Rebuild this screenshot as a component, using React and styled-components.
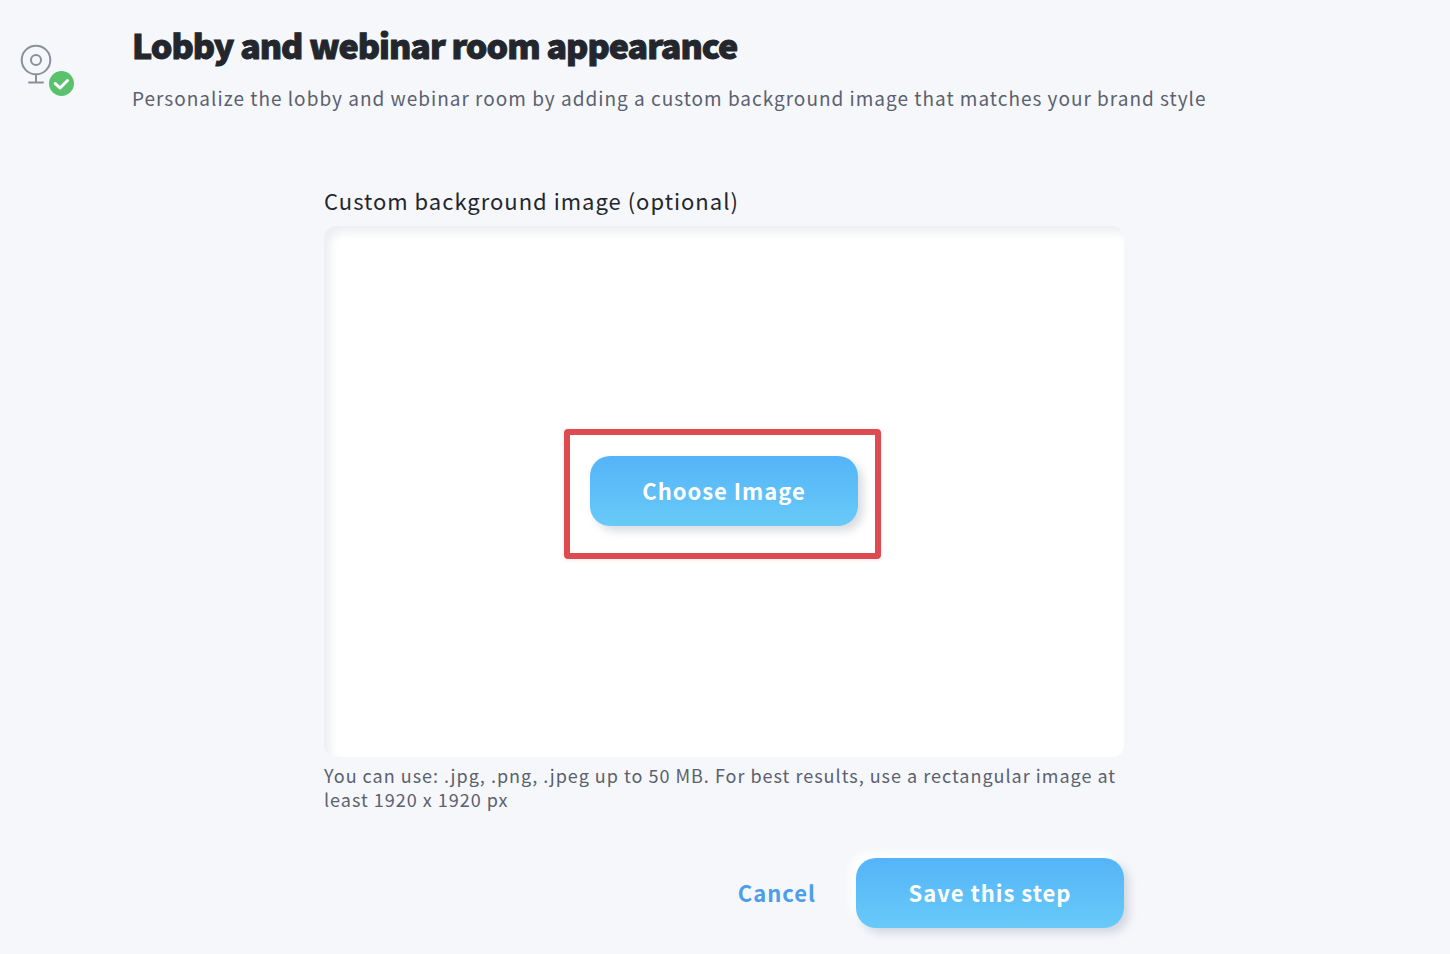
import React from "react";
import styled, { createGlobalStyle } from "styled-components";

const GlobalStyle = createGlobalStyle`
  *, *::before, *::after { box-sizing: border-box; }
  body {
    margin: 0;
    background: #f5f7fb;
    color: #23272d;
    font-family: "Noto Sans CJK JP", "Noto Sans", sans-serif;
    letter-spacing: 1px;
  }
`;

const Page = styled.main`
  min-height: 100vh;
  padding: 20px 22px 20px 20px;
`;

const StepHeader = styled.header`
  display: flex;
  align-items: flex-start;
`;

const StepIcon = styled.svg`
  flex: none;
  width: 56px;
  height: 56px;
  margin: 24px 56px 0 0;
`;

const Title = styled.h1`
  margin: 0;
  font-size: 34px;
  line-height: 50px;
  font-weight: 900;
  letter-spacing: -1px;
  -webkit-text-stroke: 1px currentColor;
`;

const Subtitle = styled.p`
  margin: 12px 0 0;
  color: #5b616e;
  font-size: 19px;
  line-height: 32px;
`;

const Form = styled.form`
  max-width: 800px;
  margin: 70px auto 0;
`;

const FieldLabel = styled.label`
  display: block;
  font-size: 22px;
  line-height: 32px;
`;

const DropArea = styled.div`
  display: flex;
  align-items: center;
  justify-content: center;
  min-height: 531px;
  margin-top: 10px;
  padding-bottom: 2px;
  border-radius: 12px;
  background: #fff;
  box-shadow: inset 6px 6px 10px #eceef2;
`;

const Highlight = styled.div`
  position: relative;

  &::after {
    content: "";
    position: absolute;
    inset: -27px -23px -33px -26px;
    border: 6px solid #dd4b50;
    border-radius: 4px;
    box-shadow: 0 1px 4px rgba(221, 75, 80, 0.15);
    pointer-events: none;
  }
`;

const Button = styled.button`
  display: block;
  min-width: ${(p) => (p.$link ? "0" : "268px")};
  height: 70px;
  padding: 0 0 2px;
  border: 0;
  border-radius: 20px;
  background: ${(p) => (p.$link ? "none" : "linear-gradient(#54b4f8, #68caf8)")};
  box-shadow: ${(p) =>
    p.$link ? "none" : "5px 5px 8px rgba(150, 155, 170, 0.35), -6px -6px 8px #fff"};
  color: ${(p) => (p.$link ? "#4d9de8" : "#fff")};
  font: inherit;
  font-size: 22px;
  font-weight: 700;
  line-height: 32px;
  letter-spacing: inherit;
  cursor: pointer;
`;

const Hint = styled.p`
  margin: 6px 0 0;
  color: #5b616e;
  font-size: 18px;
  line-height: 24px;
`;

const Actions = styled.div`
  display: flex;
  justify-content: flex-end;
  gap: 40px;
  margin-top: 47px;
`;

function WebcamDoneIcon() {
  return (
    <StepIcon viewBox="0 0 56 56" fill="none" aria-hidden="true">
      <g stroke="#8b909b" strokeWidth="2" strokeLinecap="round">
        <circle cx="16" cy="16" r="14.3" />
        <circle cx="16" cy="16" r="5" />
        <path d="M16 31v7.5M9 38.5h14" />
      </g>
      <circle cx="41.5" cy="39.5" r="12.5" fill="#5ac26c" />
      <path
        d="M35.2 39.5l4.8 4.5 7.5-7.5"
        stroke="#fff"
        strokeWidth="3"
        strokeLinecap="round"
        strokeLinejoin="round"
      />
    </StepIcon>
  );
}

export default function App() {
  return (
    <>
      <GlobalStyle />
      <Page>
        <StepHeader>
          <WebcamDoneIcon />
          <div>
            <Title>Lobby and webinar room appearance</Title>
            <Subtitle>
              Personalize the lobby and webinar room by adding a custom background image that
              matches your brand style
            </Subtitle>
          </div>
        </StepHeader>
        <Form onSubmit={(e) => e.preventDefault()}>
          <FieldLabel htmlFor="background-image">Custom background image (optional)</FieldLabel>
          <DropArea>
            <Highlight>
              <Button type="button" id="background-image" aria-describedby="background-hint">
                Choose Image
              </Button>
            </Highlight>
          </DropArea>
          <Hint id="background-hint">
            You can use: .jpg, .png, .jpeg up to 50 MB. For best results, use a rectangular image
            at least 1920 x 1920 px
          </Hint>
          <Actions>
            <Button type="button" $link>
              Cancel
            </Button>
            <Button type="submit">Save this step</Button>
          </Actions>
        </Form>
      </Page>
    </>
  );
}
